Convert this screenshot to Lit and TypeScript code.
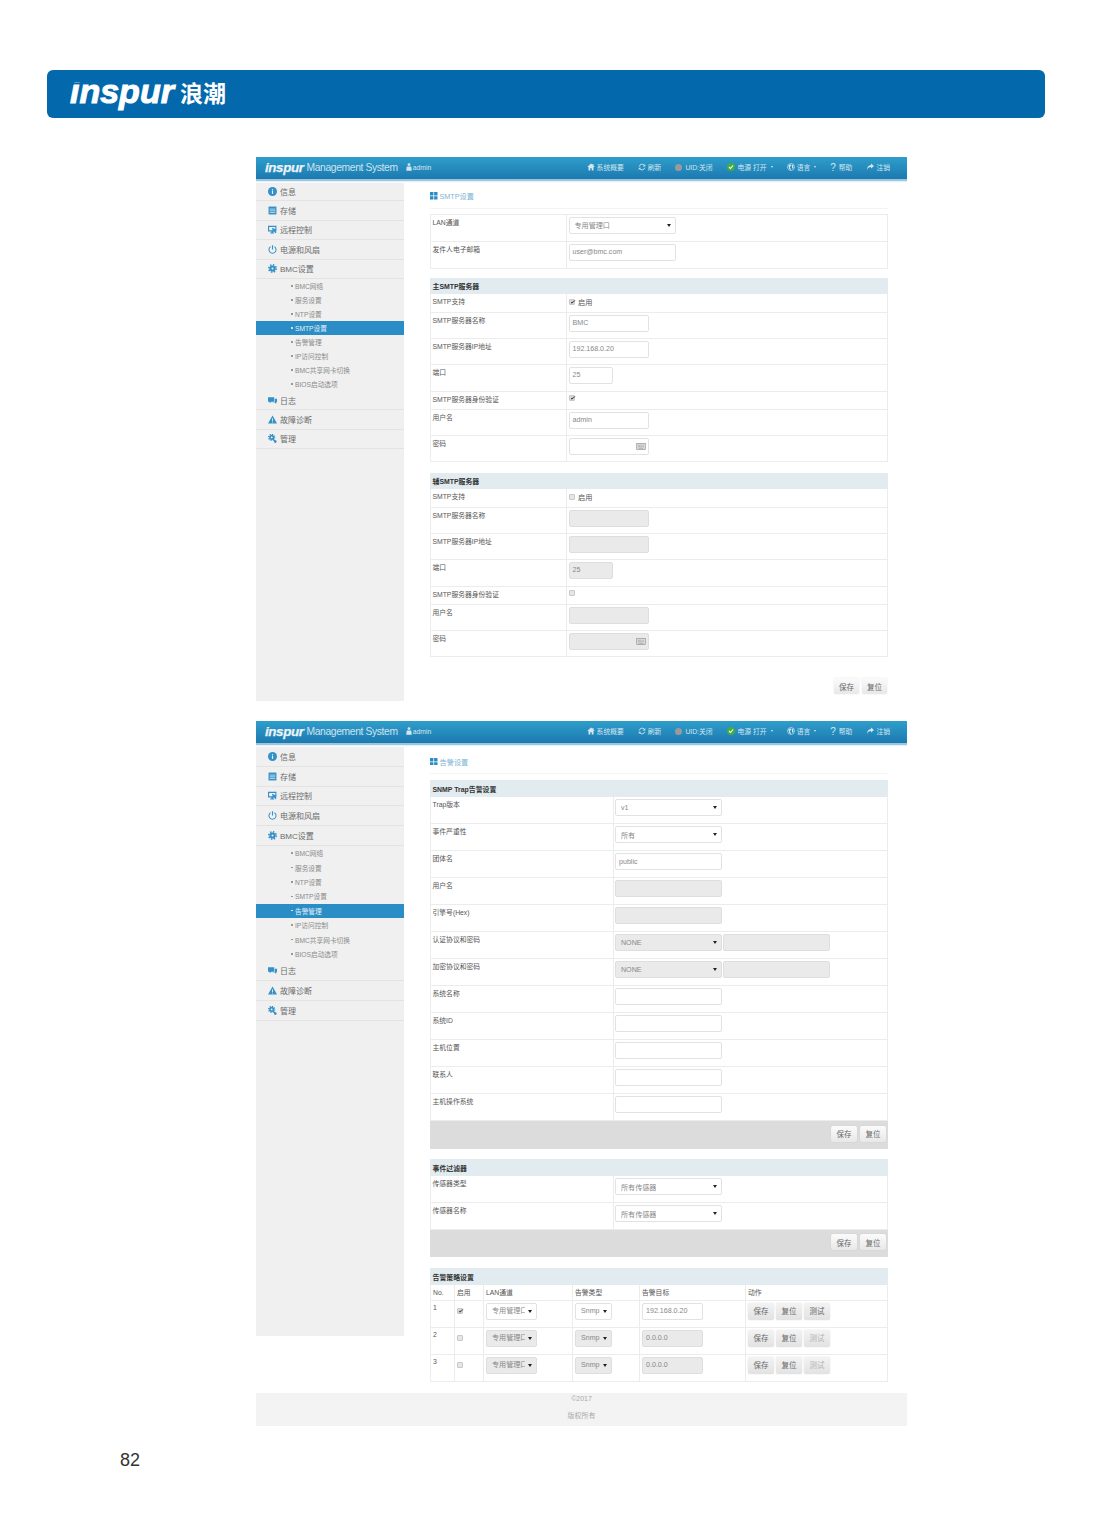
import { LitElement, css, html, svg } from 'lit';
import { customElement, property } from 'lit/decorators.js';

const icons: Record<string, unknown> = {
  info: svg`<circle cx="8" cy="8" r="8"/><rect x="7" y="7" width="2" height="5" fill="#fff"/><rect x="7" y="4" width="2" height="2" fill="#fff"/>`,
  storage: svg`<path d="M1 1h14v14H1z"/><path d="M3 5.500h10M3 8.500h10M3 11.500h10" stroke="#fff" stroke-width="1.100"/>`,
  remote: svg`<path d="M0 1.500h15v10H9v2h2V15H4v-1.500h2v-2H0zM2 3.500v6h11v-6z"/><path d="M7 5l8 3-2.500 1.200 2.500 4-2 1.300-2.500-4-1.500 2z"/>`,
  power: svg`<path d="M8 .5v7.500" fill="none" stroke="currentColor" stroke-width="2"/><path d="M4.500 3a6.300 6.300 0 1 0 7 0" fill="none" stroke="currentColor" stroke-width="1.800"/>`,
  gear: svg`<circle cx="8" cy="8" r="5.500"/><circle cx="8" cy="8" r="6.500" fill="none" stroke="currentColor" stroke-width="3" stroke-dasharray="2.500 2.600"/><circle cx="8" cy="8" r="1.800" fill="#f0f0f0"/>`,
  log: svg`<path d="M0 2h11v8H6l-3 3v-3H0z"/><path d="M12 5h4v6h-1.500v3L11.500 11H8v-.5h4z"/>`,
  warn: svg`<path d="M8 1l8 14H0z"/><rect x="7.200" y="6" width="1.600" height="5" fill="#f0f0f0"/><rect x="7.200" y="12" width="1.600" height="1.500" fill="#f0f0f0"/>`,
  manage: svg`<circle cx="6.500" cy="6" r="4.500"/><circle cx="6.500" cy="6" r="5.300" fill="none" stroke="currentColor" stroke-width="2.400" stroke-dasharray="2 2.160"/><circle cx="6.500" cy="6" r="1.700" fill="#f0f0f0"/><path d="M9 9l4 4.500" stroke="currentColor" stroke-width="2.400"/><circle cx="13" cy="13.500" r="2.300"/>`,
  home: svg`<path d="M8 1L.5 8H3v7h3.500v-4.500h3V15H13V8h2.500L13 5.600V2h-2v1.700z"/>`,
  refresh: svg`<path d="M2.500 7a5.700 5.700 0 0 1 10-2.500" fill="none" stroke="currentColor" stroke-width="1.800"/><path d="M14.500 2v5h-5z"/><path d="M13.500 9.500a5.700 5.700 0 0 1-10 2" fill="none" stroke="currentColor" stroke-width="1.800"/><path d="M1.500 14V9.500h5z"/>`,
  globe: svg`<circle cx="8" cy="8" r="7" fill="none" stroke="currentColor" stroke-width="1.300"/><path d="M3 4.500l3-1.500 3 1-1 2.500-2 .5v3l2 2-1 2-3-3zM10 3l3 2-1 3 1.500 1-2 3-1.500-3z"/>`,
  share: svg`<path d="M10 1l6 5-6 5V8C6 8 3.500 9.500 2 14c0-6 3-9.500 8-10z"/>`,
  user: svg`<circle cx="8" cy="3.200" r="2.800"/><path d="M3.500 7h9l1 8.500h-11z"/>`,
};

const icon = (name: string) => html`<svg class="ic" viewBox="0 0 16 16" fill="currentColor">${icons[name]}</svg>`;

const caret = html`<i class="caret"></i>`;

@customElement('mgmt-sidebar')
class MgmtSidebar extends LitElement {
  @property() active = '';

  static styles = css`
    :host {
      background: #f0f0f0;
      display: block;
      flex: none;
      height: var(--side-height);
      width: 148px;
    }
    .item {
      align-items: center;
      border-bottom: 1px solid #e3e3e3;
      box-sizing: border-box;
      color: #6b6b6b;
      display: flex;
      font-size: 8px;
      gap: 3px;
      height: var(--item-height);
      padding-left: 12px;
    }
    .item:first-child {
      height: calc(var(--item-height) - var(--first-trim));
    }
    .item svg {
      color: #3391c8;
      flex: none;
      height: 9px;
      width: 9px;
    }
    .sub {
      align-items: center;
      color: #8b8b8b;
      display: flex;
      font-size: 6.700px;
      gap: 2.500px;
      height: var(--sub-height);
      padding-left: 35px;
    }
    .sub::before {
      background: #888;
      border-radius: 50%;
      content: '';
      height: 1.500px;
      width: 1.500px;
    }
    .sub.on {
      background: #2a8dc5;
      color: #e4f1f8;
    }
    .sub.on::before {
      background: #e4f1f8;
    }
  `;

  render() {
    const top = [
      ['info', '信息'],
      ['storage', '存储'],
      ['remote', '远程控制'],
      ['power', '电源和风扇'],
      ['gear', 'BMC设置'],
    ];
    const subs = ['BMC网络', '服务设置', 'NTP设置', 'SMTP设置', '告警管理', 'IP访问控制', 'BMC共享网卡切换', 'BIOS启动选项'];
    const bottom = [
      ['log', '日志'],
      ['warn', '故障诊断'],
      ['manage', '管理'],
    ];
    const row = ([ic, label]: string[]) => html`<div class="item"><svg viewBox="0 0 16 16" fill="currentColor">${icons[ic]}</svg>${label}</div>`;
    return html`
      ${top.map(row)}
      ${subs.map((s) => html`<div class="sub ${s === this.active ? 'on' : ''}">${s}</div>`)}
      ${bottom.map(row)}
    `;
  }
}

@customElement('mgmt-header')
class MgmtHeader extends LitElement {
  static styles = css`
    :host {
      display: block;
    }
    .bar {
      align-items: center;
      background: linear-gradient(#2f9ecb, #1c79b0);
      box-sizing: border-box;
      color: #d5e6f0;
      display: flex;
      font-size: 6.800px;
      height: 22px;
      padding: 0 17px 2px 9px;
    }
    .strip {
      background: linear-gradient(#9cc6df 0 45%, #e6eef3 55%, #fff);
      height: 4px;
    }
    .logo {
      clip-path: inset(24% -2px -20% -2px);
      color: #eaf3f8;
      font-size: 13.400px;
      font-style: italic;
      font-weight: 700;
      -webkit-text-stroke: 0.250px #eaf3f8;
      letter-spacing: -0.400px;
      margin-right: 3px;
    }
    .name {
      color: #cfe3ee;
      font-size: 10.300px;
      letter-spacing: -0.360px;
      margin-right: 7px;
    }
    .it {
      align-items: center;
      display: flex;
      gap: 2px;
      margin-left: 14px;
    }
    .it.user {
      gap: 0;
      margin-left: 0;
      margin-right: auto;
    }
    svg.ic {
      flex: none;
      height: 8px;
      width: 8px;
    }
    .dot {
      background: #9a9a9a;
      border-radius: 50%;
      height: 7px;
      margin-right: 1px;
      width: 7px;
    }
    .ok {
      background: #43ad3f;
      border-radius: 50%;
      flex: none;
      height: 8px;
      margin-right: 1px;
      width: 8px;
    }
    .q {
      font-size: 10px;
      margin-right: 1px;
    }
    .caret {
      border-left: 1.500px solid transparent;
      border-right: 1.500px solid transparent;
      border-top: 2px solid currentColor;
      margin-left: 2px;
    }
  `;

  render() {
    return html`
      <div class="bar">
        <span class="logo">inspur</span>
        <span class="name">Management System</span>
        <span class="it user">${icon('user')}admin</span>
        <span class="it">${icon('home')}系统概要</span>
        <span class="it">${icon('refresh')}刷新</span>
        <span class="it"><i class="dot"></i>UID:关闭</span>
        <span class="it"><svg class="ok" viewBox="0 0 16 16"><path d="M4 8l3 3 5-6" fill="none" stroke="#fff" stroke-width="2.200"/></svg>电源 打开<i class="caret"></i></span>
        <span class="it">${icon('globe')}语言<i class="caret"></i></span>
        <span class="it"><span class="q">?</span>帮助</span>
        <span class="it">${icon('share')}注销</span>
      </div>
      <div class="strip"></div>
    `;
  }
}

const keyboard = html`<svg class="kb" viewBox="0 0 12 9" fill="none" stroke="#8d8d8d" stroke-width=".8">
  <rect x=".5" y=".5" width="11" height="8" fill="#ddd"/><path d="M2 3h8M2 4.700h8" stroke-dasharray="1 .6"/><path d="M3 6.700h6"/>
</svg>`;

@customElement('app-root')
export class App extends LitElement {
  static styles = css`
    :host {
      background: #fff;
      display: block;
      font-family: "Liberation Sans", "Noto Sans CJK SC", sans-serif;
      height: 1535px;
      overflow: hidden;
    }
    .banner {
      align-items: center;
      background: #0468ac;
      border-radius: 6px;
      color: #fff;
      display: flex;
      gap: 6px;
      height: 48px;
      margin: 70px 48px 39px 47px;
      padding-left: 23px;
    }
    .brand {
      clip-path: inset(33% -4px 0 -4px);
      font-size: 34px;
      font-style: italic;
      font-weight: 700;
      -webkit-text-stroke: 1px #fff;
      line-height: 48px;
      margin-top: -6px;
    }
    .brand-cn {
      font-size: 23px;
      font-weight: 700;
      line-height: 48px;
    }
    .screen {
      margin-left: 256px;
      width: 651px;
    }
    .one {
      --side-height: 518px;
      --item-height: 19.400px;
      --first-trim: 1px;
      --sub-height: 14px;
      --label: 136px;
      --cell-pad: 1.500px;
      --field-height: 16.500px;
      --label-top: 3px;
      margin-bottom: 20px;
    }
    .two {
      --side-height: 589px;
      --item-height: 19.800px;
      --first-trim: 0px;
      --sub-height: 14.400px;
      --label: 183px;
      --cell-pad: 1px;
      --field-height: 17px;
      --label-top: 3px;
    }
    .body {
      display: flex;
      min-height: 518px;
    }
    .main {
      flex: 1;
      font-size: 6.800px;
      padding: 0 19px 0 26px;
    }
    .title {
      align-items: center;
      border-bottom: 1px solid #f4f4f4;
      box-sizing: border-box;
      color: #7db4d4;
      display: flex;
      font-size: 7.200px;
      gap: 2px;
      height: 26px;
      margin-bottom: 5px;
      padding-top: 1px;
    }
    .two .title {
      height: 27px;
      margin-bottom: 6px;
      padding-top: 3px;
    }
    .title svg {
      height: 7.500px;
      width: 7.500px;
    }
    .table {
      border: 1px solid #ececec;
      border-width: 1px 1px 0;
      margin-bottom: 9px;
    }
    .table.sec {
      border-top: 0;
      margin-bottom: 11px;
    }
    .table.tight {
      margin-bottom: 10px;
    }
    .head {
      align-items: center;
      background: #e2ecf0;
      color: #333;
      display: flex;
      font-size: 6.900px;
      font-weight: 700;
      height: 16px;
      margin: 0 -1px;
      padding-left: 2.500px;
    }
    .two .head {
      height: 17px;
    }
    .row {
      border-bottom: 1px solid #ececec;
      box-sizing: border-box;
      display: grid;
      grid-template-columns: var(--label) 1fr;
      height: 26px;
    }
    .row.h27 {
      height: 27px;
    }
    .row.h19 {
      height: 19px;
    }
    .row.h18 {
      height: 18px;
    }
    .label {
      border-right: 1px solid #ececec;
      color: #555;
      line-height: 9px;
      padding: var(--label-top) 0 0 1.500px;
    }
    .cell {
      align-items: flex-start;
      display: flex;
      gap: 1px;
      padding: 2px 0 0 var(--cell-pad);
    }
    .f {
      align-items: center;
      background: #fff;
      border: 1px solid #e2e2e2;
      border-radius: 2px;
      box-sizing: border-box;
      color: #888;
      display: flex;
      font-size: 7.100px;
      height: var(--field-height);
      justify-content: space-between;
      padding: 0 2px 0 3px;
      width: 80px;
    }
    .f.sel {
      padding: 0 4px 0 5px;
    }
    .f.off {
      background: #eaeaea;
      border-color: #dedede;
    }
    .f span {
      overflow: hidden;
      white-space: nowrap;
    }
    .w107 {
      width: 107px;
    }
    .w44 {
      width: 44px;
    }
    .w51 {
      width: 51px;
    }
    .w51 span {
      width: 33px;
    }
    .w37 {
      width: 37px;
    }
    .w61 {
      width: 61px;
    }
    .caret {
      border-left: 2px solid transparent;
      border-right: 2px solid transparent;
      border-top: 3px solid #222;
      flex: none;
    }
    .kb {
      height: 7px;
      width: 10px;
    }
    .check {
      align-items: center;
      color: #555;
      display: flex;
      font-size: 7.200px;
      gap: 3.500px;
      padding-top: 1px;
    }
    .box {
      background: #e6e6e6;
      border: 1px solid #c8c8c8;
      border-radius: 1px;
      box-sizing: border-box;
      display: block;
      height: 6px;
      position: relative;
      width: 6px;
    }
    .box.on {
      background: #ddd;
    }
    .box.on::after {
      color: #333;
      content: '✔';
      font-size: 6px;
      left: 0;
      line-height: 5px;
      position: absolute;
      top: -0.500px;
    }
    .actions {
      display: flex;
      gap: 3px;
      justify-content: flex-end;
      padding-right: 1px;
    }
    .spaced {
      margin-top: 21px;
    }
    .bar {
      align-items: center;
      background: #dcdcdc;
      box-sizing: border-box;
      display: flex;
      height: 28px;
      justify-content: flex-end;
      margin: 0 -1px;
      padding: 0 2px 3px 0;
    }
    .bar.b27 {
      height: 27px;
    }
    .btn {
      align-items: center;
      background: linear-gradient(#fbfbfb, #e8e8e8);
      border-radius: 2px;
      box-shadow: 0 0 1px #bbb;
      color: #666;
      display: flex;
      font-size: 7.500px;
      height: 16px;
      justify-content: center;
      width: 25px;
    }
    .bar .btn {
      width: 26px;
    }
    .btn.dim {
      color: #b5b5b5;
    }
    .table.policy {
      margin-bottom: 11px;
    }
    .grid {
      border-bottom: 1px solid #ececec;
      box-sizing: border-box;
      display: grid;
      grid-template-columns: 24px 29px 89px 67px 106px 1fr;
      height: 27px;
    }
    .grid.cols {
      height: 16px;
    }
    .grid > div {
      align-items: flex-start;
      border-right: 1px solid #ececec;
      color: #555;
      display: flex;
      gap: 2px;
      line-height: 9px;
      padding: 2px 0 0 2px;
    }
    .grid.cols > div {
      padding-top: 3px;
    }
    .grid > div:last-child {
      border-right: 0;
    }
    .grid .btn {
      background: linear-gradient(#f3f3f3, #e2e2e2);
      height: 17px;
      width: 26px;
    }
    .grid .tick {
      padding: 7px 0 0 2px;
    }
    .copy {
      align-items: center;
      background: #f3f3f3;
      box-sizing: border-box;
      color: #aaa;
      display: flex;
      flex-direction: column;
      font-size: 7px;
      gap: 8px;
      height: 33px;
      line-height: 9px;
      padding-top: 1px;
    }
    .pageno {
      color: #333;
      font-size: 18px;
      line-height: 20px;
      margin: 24px 0 0 120px;
    }
  `;

  field(text: string, cls = '') {
    return html`<div class="f ${cls}">${text}</div>`;
  }

  select(text: string, cls = 'w107') {
    return html`<div class="f sel ${cls}"><span>${text}</span>${caret}</div>`;
  }

  smtp(title: string, off: boolean, values: string[]) {
    const c = off ? 'off' : '';
    return html`
      <div class="table sec">
        <div class="head">${title}</div>
        <div class="row h19"><div class="label">SMTP支持</div><div class="cell"><span class="check"><i class="box ${off ? '' : 'on'}"></i>启用</span></div></div>
        <div class="row"><div class="label">SMTP服务器名称</div><div class="cell">${this.field(values[0], c)}</div></div>
        <div class="row"><div class="label">SMTP服务器IP地址</div><div class="cell">${this.field(values[1], c)}</div></div>
        <div class="row h27"><div class="label">端口</div><div class="cell">${this.field('25', `w44 ${c}`)}</div></div>
        <div class="row h18"><div class="label">SMTP服务器身份验证</div><div class="cell"><span class="check"><i class="box ${off ? '' : 'on'}"></i></span></div></div>
        <div class="row"><div class="label">用户名</div><div class="cell">${this.field(values[2], c)}</div></div>
        <div class="row"><div class="label">密码</div><div class="cell"><div class="f ${c}"><span></span>${keyboard}</div></div></div>
      </div>
    `;
  }

  policyRow(no: string, on: boolean, target: string) {
    const c = on ? '' : 'off';
    return html`
      <div class="grid">
        <div>${no}</div>
        <div class="tick"><i class="box ${on ? 'on' : ''}"></i></div>
        <div>${this.select('专用管理口', `w51 ${c}`)}</div>
        <div>${this.select('Snmp', `w37 ${c}`)}</div>
        <div>${this.field(target, `w61 ${c}`)}</div>
        <div><span class="btn">保存</span><span class="btn">复位</span><span class="btn ${on ? '' : 'dim'}">测试</span></div>
      </div>
    `;
  }

  trapRow(label: string, ...fields: unknown[]) {
    return html`<div class="row h27"><div class="label">${label}</div><div class="cell">${fields}</div></div>`;
  }

  titleIcon() {
    return html`<svg viewBox="0 0 8 8" fill="#2a8cc4"><path d="M0 0h3.600v3.600H0zM4.400 0H8v3.600H4.400zM0 4.400h3.600V8H0zM4.400 4.400H8V8H4.400z"/></svg>`;
  }

  render() {
    return html`
      <div class="banner">
        <span class="brand">inspur</span>
        <span class="brand-cn">浪潮</span>
      </div>

      <section class="screen one">
        <mgmt-header></mgmt-header>
        <div class="body">
          <mgmt-sidebar active="SMTP设置"></mgmt-sidebar>
          <div class="main">
            <div class="title">${this.titleIcon()}SMTP设置</div>
            <div class="table">
              <div class="row h27"><div class="label">LAN通道</div><div class="cell">${this.select('专用管理口')}</div></div>
              <div class="row h27"><div class="label">发件人电子邮箱</div><div class="cell">${this.field('user@bmc.com', 'w107')}</div></div>
            </div>
            ${this.smtp('主SMTP服务器', false, ['BMC', '192.168.0.20', 'admin'])}
            ${this.smtp('辅SMTP服务器', true, ['', '', ''])}
            <div class="actions spaced"><span class="btn">保存</span><span class="btn">复位</span></div>
          </div>
        </div>
      </section>

      <section class="screen two">
        <mgmt-header></mgmt-header>
        <div class="body">
          <mgmt-sidebar active="告警管理"></mgmt-sidebar>
          <div class="main">
            <div class="title">${this.titleIcon()}告警设置</div>
            <div class="table sec tight">
              <div class="head">SNMP Trap告警设置</div>
              ${this.trapRow('Trap版本', this.select('v1'))}
              ${this.trapRow('事件严重性', this.select('所有'))}
              ${this.trapRow('团体名', this.field('public', 'w107'))}
              ${this.trapRow('用户名', this.field('', 'w107 off'))}
              ${this.trapRow('引擎号(Hex)', this.field('', 'w107 off'))}
              ${this.trapRow('认证协议和密码', this.select('NONE', 'w107 off'), this.field('', 'w107 off'))}
              ${this.trapRow('加密协议和密码', this.select('NONE', 'w107 off'), this.field('', 'w107 off'))}
              ${this.trapRow('系统名称', this.field('', 'w107'))}
              ${this.trapRow('系统ID', this.field('', 'w107'))}
              ${this.trapRow('主机位置', this.field('', 'w107'))}
              ${this.trapRow('联系人', this.field('', 'w107'))}
              ${this.trapRow('主机操作系统', this.field('', 'w107'))}
              <div class="bar actions"><span class="btn">保存</span><span class="btn">复位</span></div>
            </div>
            <div class="table sec">
              <div class="head">事件过滤器</div>
              <div class="row h27"><div class="label">传感器类型</div><div class="cell">${this.select('所有传感器')}</div></div>
              <div class="row h27"><div class="label">传感器名称</div><div class="cell">${this.select('所有传感器')}</div></div>
              <div class="bar b27 actions"><span class="btn">保存</span><span class="btn">复位</span></div>
            </div>
            <div class="table sec policy">
              <div class="head">告警策略设置</div>
              <div class="grid cols"><div>No.</div><div>启用</div><div>LAN通道</div><div>告警类型</div><div>告警目标</div><div>动作</div></div>
              ${this.policyRow('1', true, '192.168.0.20')}
              ${this.policyRow('2', false, '0.0.0.0')}
              ${this.policyRow('3', false, '0.0.0.0')}
            </div>
          </div>
        </div>
        <div class="copy"><span>©2017</span><span>版权所有</span></div>
      </section>

      <div class="pageno">82</div>
    `;
  }
}

export { MgmtSidebar, MgmtHeader };
